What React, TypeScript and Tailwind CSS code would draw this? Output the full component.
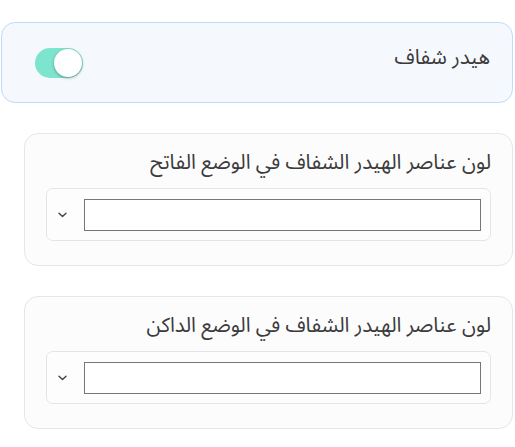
import { useState } from "react";

const font = { fontFamily: '"Noto Sans Arabic", "DejaVu Sans", "Noto Sans", sans-serif' };

const Toggle = ({ on, onChange }: { on: boolean; onChange: (v: boolean) => void }) => (
  <button
    type="button"
    onClick={() => onChange(!on)}
    className={
      on
        ? "relative w-[48px] h-[30px] rounded-full bg-[#7de5cd] transition-colors"
        : "relative w-[48px] h-[30px] rounded-full bg-[#d9dde2] transition-colors"
    }
  >
    <span
      className={
        on
          ? "absolute top-[1px] left-[19px] w-[28px] h-[28px] rounded-full bg-white shadow-[0_1px_3px_rgba(0,0,0,0.35)]"
          : "absolute top-[1px] left-[1px] w-[28px] h-[28px] rounded-full bg-white shadow-[0_1px_3px_rgba(0,0,0,0.35)]"
      }
    />
  </button>
);

const ColorField = ({ label }: { label: string }) => (
  <div className="ml-[23px] h-[133px] rounded-[14px] border border-[#e3e6ea] bg-[#fcfcfd] px-[21px] pt-[13px]">
    <div className="h-[32px] text-[20.5px] leading-[32px] text-[#3b3b3b]">{label}</div>
    <div className="mt-[9px] flex h-[53px] items-center rounded-[7px] border border-[#e2e5e8] bg-[#fdfdfd] pr-[9px]">
      <input type="text" className="h-[32px] w-[397px] shrink-0 border border-[#767676] bg-white outline-none" />
      <span className="flex w-[37px] shrink-0 justify-center pr-[7px]">
        <svg width="9" height="6" viewBox="0 0 9 6">
          <path d="M1 1.2 L4.5 4.6 L8 1.2" fill="none" stroke="#444" strokeWidth="1.4" strokeLinecap="round" strokeLinejoin="round" />
        </svg>
      </span>
    </div>
  </div>
);

export default function App() {
  const [on, setOn] = useState(true);

  return (
    <div dir="rtl" style={font} className="w-[515px] h-[447px] bg-white pt-[22px] pr-[2px] pl-[1px]">
      <div className="flex h-[81px] items-center justify-between rounded-[14px] border border-[#bddcf9] bg-[#f5f9fe] pr-[22px] pl-[33px]">
        <span className="text-[20.5px] leading-[32px] text-[#3b3b3b] -mt-[9px]">هيدر شفاف</span>
        <Toggle on={on} onChange={setOn} />
      </div>
      <div className="mt-[30px] flex flex-col gap-[30px]">
        <ColorField label="لون عناصر الهيدر الشفاف في الوضع الفاتح" />
        <ColorField label="لون عناصر الهيدر الشفاف في الوضع الداكن" />
      </div>
    </div>
  );
}
